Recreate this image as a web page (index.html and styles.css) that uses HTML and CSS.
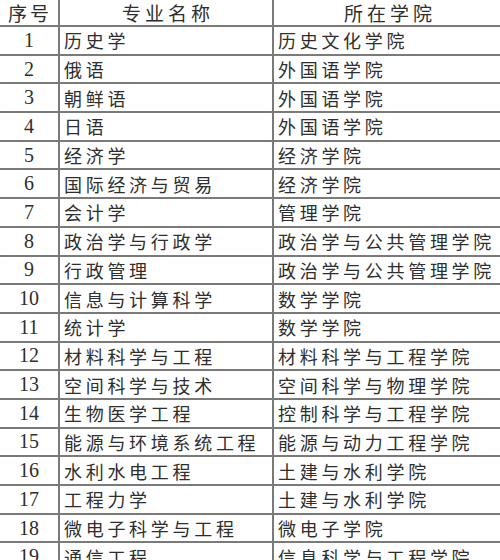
FILE: index.html
```html
<!DOCTYPE html>
<html lang="zh">
<head>
<meta charset="utf-8">
<link rel="stylesheet" href="styles.css">
</head>
<body>
<div class="sheet">
  <div class="cell head num">序号</div><div class="cell head">专业名称</div><div class="cell head">所在学院</div>
  <div class="cell num">1</div><div class="cell txt">历史学</div><div class="cell txt">历史文化学院</div>
  <div class="cell num">2</div><div class="cell txt">俄语</div><div class="cell txt">外国语学院</div>
  <div class="cell num">3</div><div class="cell txt">朝鲜语</div><div class="cell txt">外国语学院</div>
  <div class="cell num">4</div><div class="cell txt">日语</div><div class="cell txt">外国语学院</div>
  <div class="cell num">5</div><div class="cell txt">经济学</div><div class="cell txt">经济学院</div>
  <div class="cell num">6</div><div class="cell txt">国际经济与贸易</div><div class="cell txt">经济学院</div>
  <div class="cell num">7</div><div class="cell txt">会计学</div><div class="cell txt">管理学院</div>
  <div class="cell num">8</div><div class="cell txt">政治学与行政学</div><div class="cell txt">政治学与公共管理学院</div>
  <div class="cell num">9</div><div class="cell txt">行政管理</div><div class="cell txt">政治学与公共管理学院</div>
  <div class="cell num">10</div><div class="cell txt">信息与计算科学</div><div class="cell txt">数学学院</div>
  <div class="cell num">11</div><div class="cell txt">统计学</div><div class="cell txt">数学学院</div>
  <div class="cell num">12</div><div class="cell txt">材料科学与工程</div><div class="cell txt">材料科学与工程学院</div>
  <div class="cell num">13</div><div class="cell txt">空间科学与技术</div><div class="cell txt">空间科学与物理学院</div>
  <div class="cell num">14</div><div class="cell txt">生物医学工程</div><div class="cell txt">控制科学与工程学院</div>
  <div class="cell num">15</div><div class="cell txt">能源与环境系统工程</div><div class="cell txt">能源与动力工程学院</div>
  <div class="cell num">16</div><div class="cell txt">水利水电工程</div><div class="cell txt">土建与水利学院</div>
  <div class="cell num">17</div><div class="cell txt">工程力学</div><div class="cell txt">土建与水利学院</div>
  <div class="cell num">18</div><div class="cell txt">微电子科学与工程</div><div class="cell txt">微电子学院</div>
  <div class="cell num">19</div><div class="cell txt">通信工程</div><div class="cell txt">信息科学与工程学院</div>
</div>
</body>
</html>
```
FILE: styles.css
```css
html, body {
  margin: 0;
  padding: 0;
  background: #fff;
  overflow: hidden;
  width: 500px;
  height: 560px;
}
.sheet {
  display: grid;
  grid-template-columns: 58px 212px 240px;
  grid-template-rows: 25px;
  grid-auto-rows: 26.7px;
  gap: 2px;
  background: #7a7a7a;
  width: 520px;
  color: #2e2e2e;
}
.cell {
  background: #fff;
  display: flex;
  align-items: center;
  font-family: "Noto Sans CJK SC", sans-serif;
  font-size: 18px;
  letter-spacing: 3.7px;
  white-space: nowrap;
  overflow: hidden;
}
.head {
  justify-content: center;
  font-size: 19px;
  letter-spacing: 4px;
  padding-left: 4px;
}
.txt {
  padding-left: 4px;
}
.num {
  justify-content: center;
  font-family: "Liberation Serif", "Noto Sans CJK SC", serif;
  font-size: 20px;
  letter-spacing: 0;
}
.head.num {
  font-family: "Noto Sans CJK SC", sans-serif;
  font-size: 19px;
  letter-spacing: 3px;
  padding-left: 2px;
}
.sheet > .cell:nth-child(3) {
  padding-right: 12px;
}
```
